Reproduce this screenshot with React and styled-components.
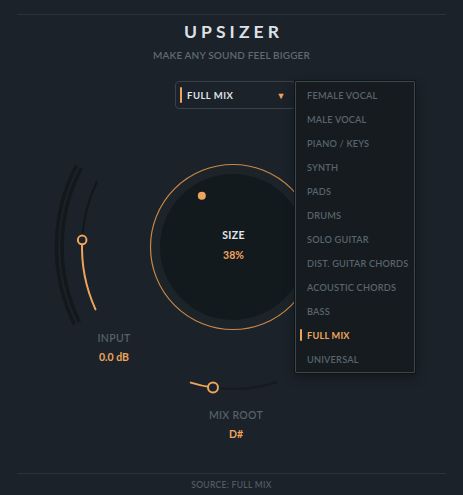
import React from "react";
import styled, { createGlobalStyle } from "styled-components";

const ORANGE = "#eea45c";
const BG = "#1b2229";

const Global = createGlobalStyle`
  html, body { margin: 0; padding: 0; background: ${BG}; }
  body { font-family: Lato, "Noto Sans", sans-serif; -webkit-font-smoothing: antialiased; }
  * { box-sizing: border-box; }
`;

const Panel = styled.div`
  position: relative;
  width: 463px;
  height: 495px;
  overflow: hidden;
  background: ${BG};
  display: flex;
  flex-direction: column;
  padding: 14px 17px 0;
`;

const Header = styled.header`
  border-top: 1px solid #2a333b;
  display: flex;
  flex-direction: column;
  align-items: center;
  padding-top: 6px;
`;

const Title = styled.h1`
  margin: 0;
  font-size: 17.5px;
  line-height: 22px;
  font-weight: 700;
  letter-spacing: 4.1px;
  padding-left: 4px;
  color: #dde1e5;
`;

const Subtitle = styled.div`
  margin-top: 6px;
  font-size: 10px;
  line-height: 12px;
  letter-spacing: 0.15px;
  font-weight: 600;
  color: #5f6a73;
`;

const SelectorRow = styled.div`
  position: relative;
  margin-top: 20px;
  margin-left: 158px;
  height: 28px;
  z-index: 2;
`;

const SelectButton = styled.div`
  width: 121px;
  height: 28px;
  border: 1px solid #38424a;
  border-radius: 4px;
  display: flex;
  align-items: center;
  padding: 0 9px 0 4px;
  gap: 5px;
  color: #dfe3e6;
  font-size: 9.5px;
  font-weight: 700;
  letter-spacing: 0.5px;
`;

const Accent = styled.span`
  width: 2px;
  height: ${(p) => p.$h}px;
  background: ${ORANGE};
  border-radius: 1px;
  flex: none;
`;

const ButtonText = styled.span`
  flex: 1;
`;

const Caret = styled.span`
  color: ${ORANGE};
  font-size: 9px;
`;

const Menu = styled.ul`
  position: absolute;
  left: 120px;
  top: 0;
  width: 120px;
  margin: 0;
  padding: 1px 0;
  list-style: none;
  background: #151b1f;
  border: 1px solid #3b454c;
  box-shadow: 0 0 0 1px #0f1417, 0 4px 12px rgba(0, 0, 0, 0.35);
  border-radius: 1px;
`;

const MenuItem = styled.li`
  height: 24px;
  display: flex;
  align-items: center;
  gap: 5px;
  padding-left: ${(p) => (p.$active ? 4 : 11)}px;
  font-size: 9.2px;
  font-weight: ${(p) => (p.$active ? 700 : 600)};
  letter-spacing: 0.2px;
  color: ${(p) => (p.$active ? ORANGE : "#59646c")};
  white-space: nowrap;
`;

const Drawing = styled.svg`
  position: absolute;
  left: 0;
  top: 0;
  pointer-events: none;
  z-index: 0;
`;

const Readout = styled.div`
  position: absolute;
  left: ${(p) => p.$x}px;
  top: ${(p) => p.$y}px;
  transform: translateX(-50%);
  display: flex;
  flex-direction: column;
  align-items: center;
  gap: ${(p) => p.$gap}px;
  z-index: 1;
`;

const ReadLabel = styled.div`
  font-size: 10.5px;
  line-height: 12px;
  font-weight: ${(p) => (p.$bright ? 700 : 600)};
  letter-spacing: 0.3px;
  color: ${(p) => (p.$bright ? "#e3e6e9" : "#55606a")};
  white-space: nowrap;
`;

const ReadValue = styled.div`
  font-size: 10.5px;
  line-height: 12px;
  font-weight: 700;
  color: ${ORANGE};
  white-space: nowrap;
`;

const Spacer = styled.div`
  flex: 1;
`;

const Footer = styled.footer`
  border-top: 1px solid #2a333b;
  height: 22px;
  display: flex;
  align-items: center;
  justify-content: center;
  font-size: 8.5px;
  font-weight: 600;
  letter-spacing: 0.3px;
  color: #515c65;
`;

const CX = 233;
const CY = 247;
const rad = (a) => (a * Math.PI) / 180;
const pt = (r, a) => [CX + r * Math.cos(rad(a)), CY + r * Math.sin(rad(a))];
const arc = (r, a0, a1) => {
  const [x0, y0] = pt(r, a0);
  const [x1, y1] = pt(r, a1);
  const large = a1 - a0 > 180 ? 1 : 0;
  return `M${x0.toFixed(2)} ${y0.toFixed(2)} A${r} ${r} 0 ${large} 1 ${x1.toFixed(2)} ${y1.toFixed(2)}`;
};

const items = [
  "FEMALE VOCAL",
  "MALE VOCAL",
  "PIANO / KEYS",
  "SYNTH",
  "PADS",
  "DRUMS",
  "SOLO GUITAR",
  "DIST. GUITAR CHORDS",
  "ACOUSTIC CHORDS",
  "BASS",
  "FULL MIX",
  "UNIVERSAL",
];

export default function App() {
  const inKnob = pt(151, 182.7);
  const rootKnob = pt(142, 98.1);
  const dot = pt(60, 238.7);
  return (
    <>
      <Global />
      <Panel>
        <Drawing width="463" height="495" viewBox="0 0 463 495">
          <path d={arc(171, 154, 207.5)} stroke="#12181c" strokeWidth="3.5" fill="none" />
          <path d={arc(176.5, 154, 207.5)} stroke="#12181c" strokeWidth="3.5" fill="none" />
          <path d={arc(151, 182.7, 205.7)} stroke="#11171b" strokeWidth="2" fill="none" />
          <path d={arc(151, 155.6, 182.7)} stroke={ORANGE} strokeWidth="2" fill="none" strokeLinecap="round" />
          <circle cx={inKnob[0]} cy={inKnob[1]} r="4.3" fill={BG} stroke={ORANGE} strokeWidth="2" />

          <circle cx={CX} cy={CY} r="82.5" fill="#1c242a" stroke="#c98848" strokeWidth="1.2" />
          <circle cx={CX} cy={CY} r="73" fill="#131a1e" />
          <circle cx={dot[0]} cy={dot[1]} r="4" fill={ORANGE} />

          <path d={arc(142, 71.9, 98.1)} stroke="#151b20" strokeWidth="2" fill="none" />
          <path d={arc(142, 98.1, 107.3)} stroke={ORANGE} strokeWidth="2" fill="none" strokeLinecap="round" />
          <circle cx={rootKnob[0]} cy={rootKnob[1]} r="5" fill={BG} stroke={ORANGE} strokeWidth="2" />
        </Drawing>

        <Header>
          <Title>UPSIZER</Title>
          <Subtitle>MAKE ANY SOUND FEEL BIGGER</Subtitle>
        </Header>

        <SelectorRow>
          <SelectButton>
            <Accent $h={16} />
            <ButtonText>FULL MIX</ButtonText>
            <Caret>▼</Caret>
          </SelectButton>
          <Menu>
            {items.map((it) => (
              <MenuItem key={it} $active={it === "FULL MIX"}>
                {it === "FULL MIX" && <Accent $h={12} />}
                {it}
              </MenuItem>
            ))}
          </Menu>
        </SelectorRow>

        <Readout $x={233.5} $y={229} $gap={8}>
          <ReadLabel $bright>SIZE</ReadLabel>
          <ReadValue>38%</ReadValue>
        </Readout>
        <Readout $x={114} $y={332} $gap={7}>
          <ReadLabel>INPUT</ReadLabel>
          <ReadValue>0.0 dB</ReadValue>
        </Readout>
        <Readout $x={236} $y={409} $gap={7}>
          <ReadLabel>MIX ROOT</ReadLabel>
          <ReadValue>D#</ReadValue>
        </Readout>

        <Spacer />
        <Footer>SOURCE: FULL MIX</Footer>
      </Panel>
    </>
  );
}
